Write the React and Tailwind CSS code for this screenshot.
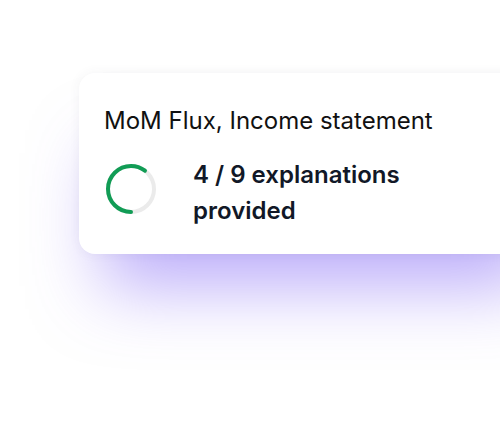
export default function App() {
  const r = 23
  const c = 2 * Math.PI * r
  const frac = 0.6

  return (
    <div className="w-[500px] h-[447px] bg-white overflow-hidden font-['Inter',sans-serif]">
      <div className="ml-[79px] mt-[73px] w-[480px] h-[181px] bg-white rounded-2xl pl-[25px] pt-[32px] shadow-[0_0_12px_rgba(60,60,90,0.06),0_56px_70px_-24px_rgba(120,90,245,0.5)]">
        <h3 className="text-[24px] leading-[32px] text-[#111] tracking-[0px]">MoM Flux, Income statement</h3>
        <div className="flex items-start mt-[20px]">
          <svg width="54" height="54" viewBox="0 0 54 54" className="mt-[5px]">
            <circle cx="27" cy="27" r={r} fill="none" stroke="#ebebeb" strokeWidth="4" />
            <circle
              cx="27"
              cy="27"
              r={r}
              fill="none"
              stroke="#119c55"
              strokeWidth="4"
              strokeLinecap="round"
              strokeDasharray={`${c * frac} ${c}`}
              transform="rotate(90 27 27)"
            />
          </svg>
          <p className="ml-[35px] text-[24px] leading-[36px] font-semibold text-[#111827] w-[250px]">
            4 / 9 explanations provided
          </p>
        </div>
      </div>
    </div>
  )
}
